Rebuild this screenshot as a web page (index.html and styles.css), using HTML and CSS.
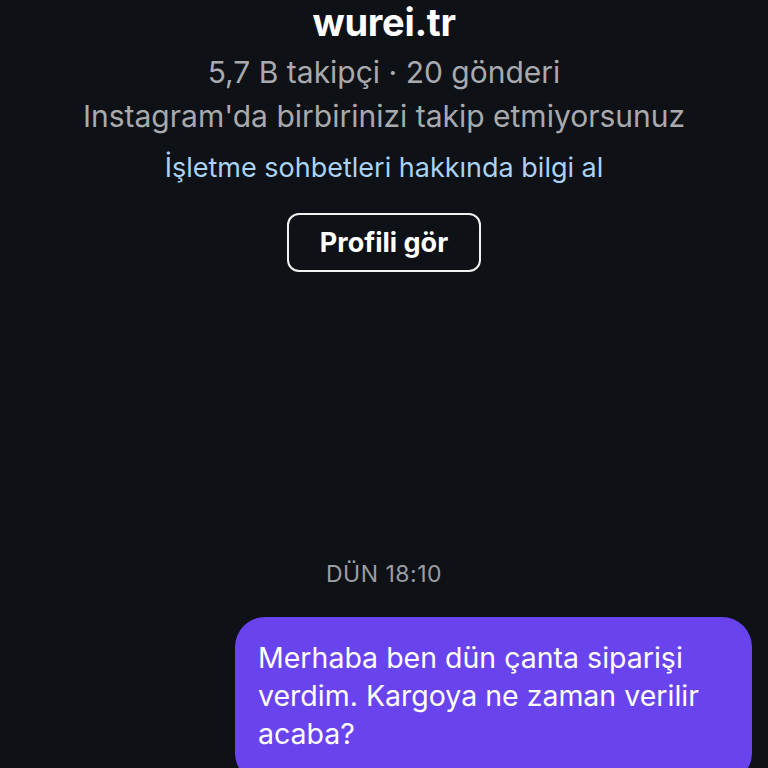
FILE: index.html
```html
<!DOCTYPE html>
<html lang="tr">
<head>
<meta charset="utf-8">
<title>wurei.tr</title>
<link rel="stylesheet" href="styles.css">
</head>
<body>
<main class="thread">
  <header class="profile">
    <h1 class="profile-name">wurei.tr</h1>
    <p class="profile-stats">5,7 B takipçi · 20 gönderi</p>
    <p class="profile-note">Instagram'da birbirinizi takip etmiyorsunuz</p>
    <a class="profile-link" href="#">İşletme sohbetleri hakkında bilgi al</a>
    <button class="profile-button" type="button">Profili gör</button>
  </header>
  <section class="messages">
    <div class="timestamp">DÜN 18:10</div>
    <div class="bubble bubble-out">Merhaba ben dün çanta siparişi verdim. Kargoya ne zaman verilir acaba?</div>
  </section>
</main>
</body>
</html>
```

FILE: styles.css
```css
html, body {
  margin: 0;
  padding: 0;
  background: #0e1116;
}
body {
  width: 768px;
  height: 768px;
  overflow: hidden;
  font-family: Inter, "Noto Sans", "Liberation Sans", sans-serif;
  color: #ffffff;
}
.thread {
  display: flex;
  flex-direction: column;
}
.profile {
  display: flex;
  flex-direction: column;
  align-items: center;
}
.profile-name {
  margin: 0;
  font-size: 38px;
  line-height: 44px;
  font-weight: 700;
  letter-spacing: -0.3px;
  color: #ffffff;
}
.profile-stats {
  margin: 6px 0 0;
  font-size: 30px;
  line-height: 44px;
  color: #a9aaae;
}
.profile-note {
  margin: 0;
  font-size: 30px;
  line-height: 44px;
  color: #a9aaae;
}
.profile-link {
  margin-top: 8px;
  font-size: 27px;
  line-height: 44px;
  color: #a9d2f4;
  text-decoration: none;
}
.profile-button {
  margin-top: 23px;
  height: 59px;
  padding: 0 31px;
  border: 2px solid #f2f2f2;
  border-radius: 12px;
  background: transparent;
  color: #ffffff;
  font-family: inherit;
  font-size: 27px;
  font-weight: 700;
  line-height: 55px;
}
.messages {
  display: flex;
  flex-direction: column;
  align-items: center;
  margin-top: 287px;
}
.timestamp {
  font-size: 23px;
  line-height: 30px;
  letter-spacing: 0.5px;
  color: #9c9da2;
}
.bubble {
  margin-top: 28px;
  font-size: 28.5px;
  line-height: 38px;
  border-radius: 30px;
}
.bubble-out {
  align-self: flex-end;
  margin-right: 16px;
  width: 517px;
  box-sizing: border-box;
  padding: 22px 23px 30px;
  background: #6944ee;
  color: #ffffff;
}
```
